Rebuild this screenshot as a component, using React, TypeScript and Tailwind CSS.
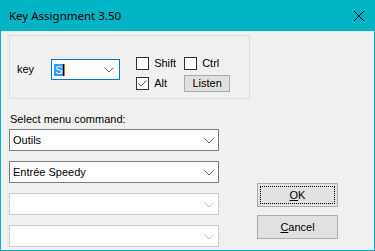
import React from "react";

const Chevron = ({ color = "#5a5a5a" }: { color?: string }) => (
  <svg width="10" height="6" viewBox="0 0 10 6" className="block">
    <path d="M0.5 0.5 L5 5 L9.5 0.5" fill="none" stroke={color} strokeWidth="1" />
  </svg>
);

const Combo = ({ text, disabled }: { text?: string; disabled?: boolean }) => (
  <div
    className={`flex items-center w-[210px] h-[22px] bg-white border ${
      disabled ? "border-[#cccccc]" : "border-[#7a7a7a]"
    }`}
  >
    <span className="flex-1 pl-[3px] text-[11px] leading-none text-black">{text}</span>
    <span className="pr-[4px] pt-[1px]">
      <Chevron color={disabled ? "#bfbfbf" : "#5a5a5a"} />
    </span>
  </div>
);

const Check = ({ checked }: { checked?: boolean }) => (
  <div className="w-[13px] h-[13px] border border-[#333333] bg-white flex items-center justify-center">
    {checked && (
      <svg width="11" height="11" viewBox="0 0 11 11">
        <path d="M1.5 5.5 L4 8 L9.5 2.5" fill="none" stroke="#555" strokeWidth="1" />
      </svg>
    )}
  </div>
);

export default function App() {
  return (
    <div
      className="w-[375px] h-[251px] flex flex-col bg-[#f0f0f0] text-black"
      style={{ fontFamily: '"Liberation Sans", Arial, sans-serif' }}
    >
      <div className="h-[31px] bg-[#00b4c4] flex items-center justify-between pl-[9px] pr-[9px]">
        <span className="text-[11.5px] text-black" style={{ fontFamily: '"Noto Sans", "Open Sans", sans-serif' }}>
          Key Assignment 3.50
        </span>
        <svg width="12" height="12" viewBox="0 0 12 12" className="mr-[1px]">
          <path d="M1 1 L11 11 M11 1 L1 11" stroke="#000" strokeWidth="1" />
        </svg>
      </div>
      <div className="flex-1 flex border-l border-r border-b border-[#00b4c4] pl-[8px]">
        <div className="w-[241px] pt-[4px] flex flex-col">
          <div className="h-[64px] border border-[#dcdcdc] flex items-start">
            <span className="ml-[7px] mt-[28px] text-[11px] leading-none">key</span>
            <div className="ml-[17px] mt-[23px] w-[69px] h-[21px] border border-[#0078d7] bg-white flex items-center">
              <span className="ml-[2px] bg-[#3399ff] text-white text-[11px] leading-[12px] px-[1px]">S</span>
              <span className="w-[1px] h-[12px] bg-black"></span>
              <span className="w-[1px] h-[12px] bg-[#e07000]"></span>
              <span className="flex-1"></span>
              <span className="pr-[5px]">
                <Chevron />
              </span>
            </div>
            <div className="ml-[16px] mt-[21px] flex flex-col gap-[7px]">
              <div className="flex items-center h-[13px]">
                <Check />
                <span className="ml-[5px] text-[11px] leading-none w-[30px]">Shift</span>
                <Check />
                <span className="ml-[5px] text-[11px] leading-none">Ctrl</span>
              </div>
              <div className="flex items-center h-[13px]">
                <Check checked />
                <span className="ml-[5px] text-[11px] leading-none w-[30px]">Alt</span>
                <div className="w-[46px] h-[17px] -mt-[1px] border border-[#adadad] bg-[#e1e1e1] flex items-center justify-center text-[11px] leading-none">
                  Listen
                </div>
              </div>
            </div>
          </div>
          <div className="mt-[15px] ml-[1px] text-[11px] leading-none">Select menu command:</div>
          <div className="mt-[4px] flex flex-col gap-[10px]">
            <Combo text="Outils" />
            <Combo text="Entrée Speedy" />
            <Combo disabled />
            <Combo disabled />
          </div>
        </div>
        <div className="ml-[7px] mt-[152px] flex flex-col gap-[8px]">
          <div className="w-[81px] h-[24px] border border-[#adadad] bg-[#e1e1e1] p-[2px]">
            <div className="w-full h-full border border-dotted border-black flex items-center justify-center text-[11px] leading-none">
              <span>
                <span className="underline">O</span>K
              </span>
            </div>
          </div>
          <div className="w-[81px] h-[24px] border border-[#adadad] bg-[#e1e1e1] flex items-center justify-center text-[11px] leading-none">
            <span>
              <span className="underline">C</span>ancel
            </span>
          </div>
        </div>
      </div>
    </div>
  );
}
